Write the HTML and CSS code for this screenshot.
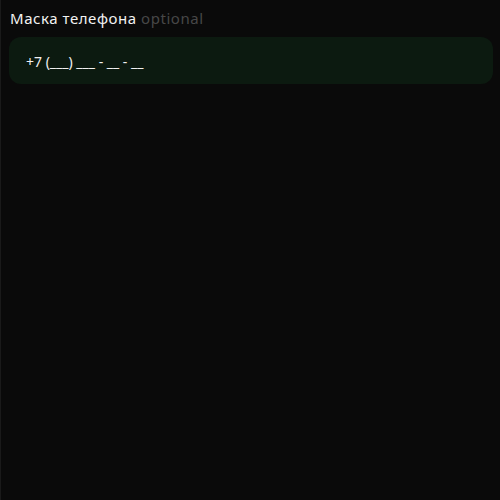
FILE: index.html
```html
<!DOCTYPE html>
<html lang="ru">
<head>
<meta charset="utf-8">
<link rel="stylesheet" href="styles.css">
</head>
<body>
<div class="field">
  <label class="label">Маска телефона <span class="optional">optional</span></label>
  <div class="input">+7 (___) ___ - __ - __</div>
</div>
</body>
</html>
```
FILE: styles.css
```css
html, body {
  margin: 0;
  padding: 0;
  height: 100%;
  background: #0a0a0a;
}
body {
  border-left: 1px solid #1a1a1a;
  box-sizing: border-box;
  font-family: "Noto Sans", "Open Sans", sans-serif;
  color: #f2f2f2;
}
.field {
  display: flex;
  flex-direction: column;
  gap: 9px;
  padding: 8px 7px 0 8px;
}
.label {
  font-size: 15px;
  line-height: 20px;
  padding-left: 1px;
  letter-spacing: 0.55px;
}
.optional {
  color: #474747;
}
.input {
  height: 47px;
  box-sizing: border-box;
  background: #0c1a10;
  border-radius: 12px;
  padding: 2px 17px 0;
  display: flex;
  align-items: center;
  font-size: 14px;
  color: #f0f0f0;
  white-space: pre;
}
```
